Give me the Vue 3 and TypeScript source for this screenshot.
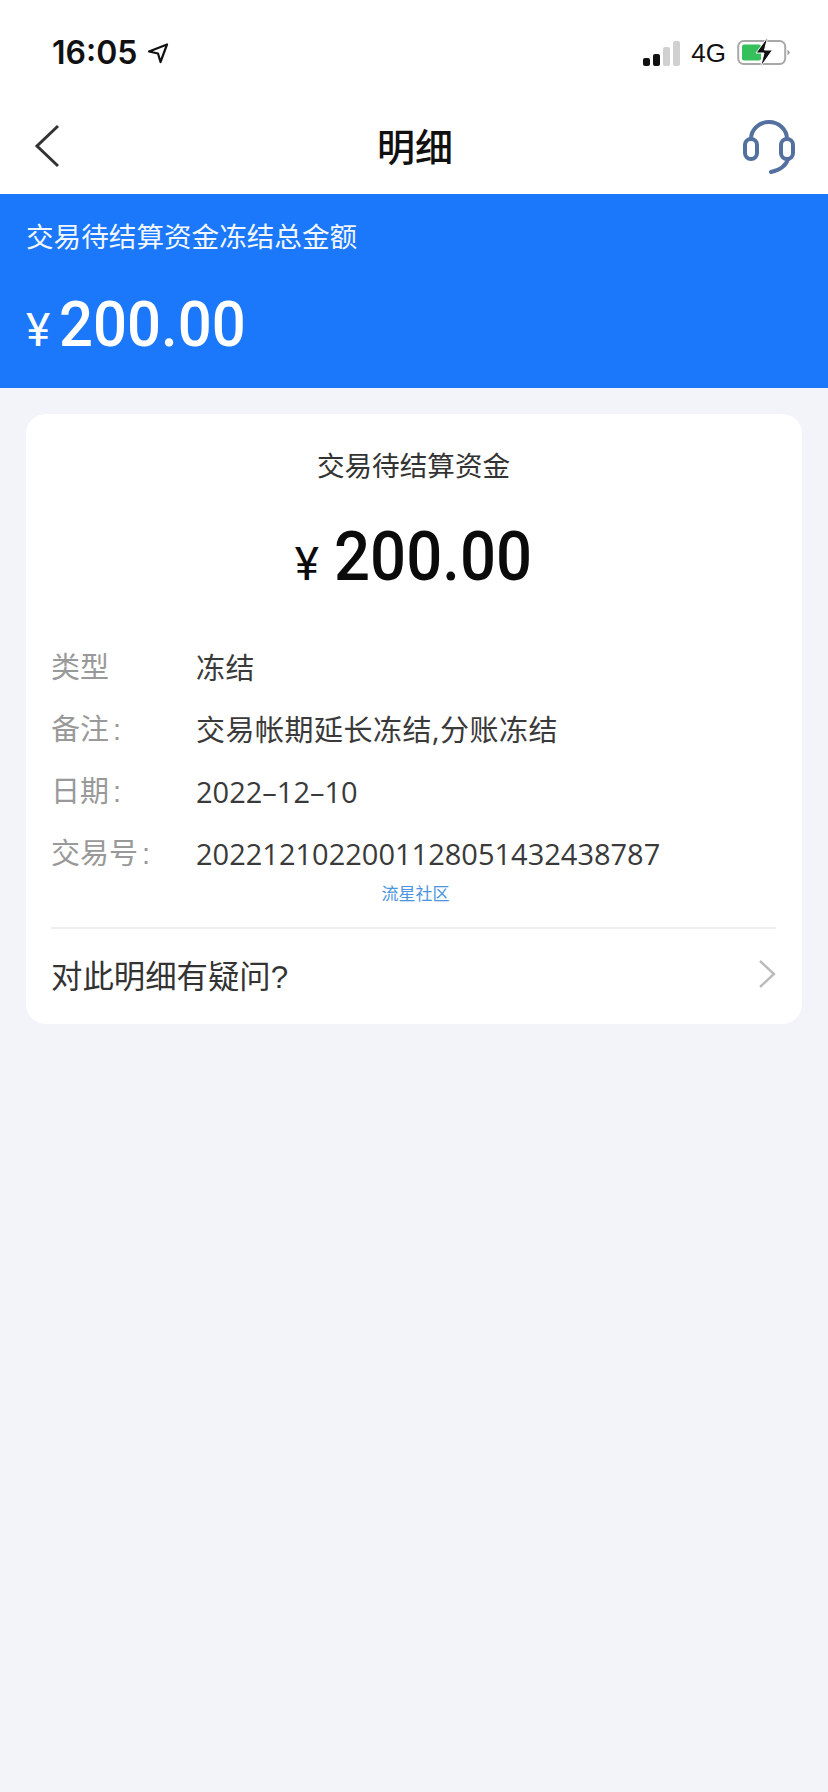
<script setup lang="ts">
const rows: { label: string; colon: boolean; value: string; cjk: boolean }[] = [
  { label: '类型', colon: false, value: '冻结', cjk: true },
  { label: '备注', colon: true, value: '交易帐期延长冻结,分账冻结', cjk: true },
  { label: '日期', colon: true, value: '2022–12–10', cjk: false },
  { label: '交易号', colon: true, value: '2022121022001128051432438787', cjk: false },
]
</script>

<template>
  <div class="page">
    <div class="status">
      <div class="time">
        <span>16:05</span>
        <svg class="loc" width="22" height="22" viewBox="0 0 22 22">
          <path d="M2 9.5 20 2.5 13.5 20 11 11.5Z" fill="none" stroke="#111" stroke-width="2.2" stroke-linejoin="round" />
        </svg>
      </div>
      <div class="sys">
        <div class="bars">
          <i class="b1"></i><i class="b2"></i><i class="b3"></i><i class="b4"></i>
        </div>
        <span class="net">4G</span>
        <svg width="53" height="30" viewBox="0 0 53 30">
          <rect x="1.2" y="3" width="47" height="23" rx="5.5" fill="#fff" stroke="#a8a8a8" stroke-width="2" />
          <rect x="5" y="6.5" width="19" height="16" rx="2" fill="#35c05c" />
          <path d="M50.5 11.5 53 14.5 50.5 17.5Z" fill="#999" />
          <path d="M30 0 19 15h8l-3.500 14 12-17h-8l3-12Z" fill="#111" stroke="#fff" stroke-width="1" />
        </svg>
      </div>
    </div>
    <div class="nav">
      <svg class="back" width="28" height="44" viewBox="0 0 28 44">
        <path d="M24 2 3 22l21 20" fill="none" stroke="#333" stroke-width="3" />
      </svg>
      <h1>明细</h1>
      <svg class="help" width="54" height="54" viewBox="0 0 54 54" fill="none" stroke="#54709f" stroke-width="4">
        <path d="M9 19a18 17 0 0 1 36 0" />
        <rect x="3" y="19" width="12" height="20" rx="6" />
        <rect x="39" y="19" width="12" height="20" rx="6" />
        <path d="M46 39c-2 7-8 11-17 13" stroke-linecap="round" />
      </svg>
    </div>
    <div class="banner">
      <div class="banner-title">交易待结算资金冻结总金额</div>
      <div class="amount">
        <span class="cur">¥</span><span class="num">200.00</span>
      </div>
    </div>
    <div class="card">
      <div class="card-title">交易待结算资金</div>
      <div class="amount dark">
        <span class="cur">¥</span><span class="num">200.00</span>
      </div>
      <div class="rows">
        <div v-for="r in rows" :key="r.label" class="row">
          <span class="label">{{ r.label }}<span v-if="r.colon" class="colon">:</span></span>
          <span class="value" :class="{ cjk: r.cjk }">{{ r.value }}</span>
        </div>
      </div>
      <div class="mark">流星社区</div>
      <div class="foot">
        <span>对此明细有疑问?</span>
        <svg width="18" height="30" viewBox="0 0 18 30">
          <path d="M2 2l14 13L2 28" fill="none" stroke="#bbb" stroke-width="2.4" />
        </svg>
      </div>
    </div>
  </div>
</template>

<style>
html, body { margin: 0; background: #f3f4f9; }
</style>

<style scoped>
.page {
  width: 828px;
  height: 1792px;
  background: #f3f4f9;
  font-family: "Liberation Sans", "Noto Sans CJK SC", sans-serif;
  overflow: hidden;
}
.status {
  height: 96px;
  background: #fff;
  display: flex;
  justify-content: space-between;
  align-items: flex-start;
  padding: 33px 38px 0 52px;
  box-sizing: border-box;
}
.time {
  display: flex;
  align-items: center;
  gap: 10px;
  font-family: Inter, sans-serif;
  font-size: 32px;
  font-weight: 600;
  line-height: 40px;
  color: #111;
}
.sys { display: flex; align-items: center; gap: 11px; height: 40px; }
.bars { display: flex; align-items: flex-end; gap: 3px; height: 26px; }
.bars i { width: 7px; border-radius: 2px; background: #d0d0d0; }
.bars .b1 { height: 8px; background: #111; }
.bars .b2 { height: 12px; background: #111; }
.bars .b3 { height: 19px; }
.bars .b4 { height: 25px; }
.net { font-size: 26px; color: #111; }
.nav {
  height: 98px;
  background: #fff;
  display: grid;
  grid-template-columns: 1fr auto 1fr;
  align-items: center;
  padding: 0 32px 0 34px;
  box-sizing: border-box;
}
.nav h1 {
  margin: 0 0 2px;
  font-size: 38px;
  font-weight: 500;
  color: #111;
}
.back { margin-top: 2px; }
.help { margin-top: 4px; justify-self: end; }
.banner {
  height: 194px;
  background: #1b78fb;
  color: #fff;
  padding: 24px 26px 0;
  box-sizing: border-box;
}
.banner-title { font-size: 27.6px; line-height: 40px; color: #f1f6ff; }
.amount {
  display: flex;
  align-items: baseline;
  gap: 9px;
  margin-top: 31px;
  font-family: Roboto, sans-serif;
  font-weight: 500;
  font-size: 63px;
  line-height: 72px;
}
.cur { font-size: 46px; font-weight: 400; }
.num {
  display: inline-block;
  transform: scaleX(0.95);
  transform-origin: left center;
  margin-right: -10px;
}
.card {
  margin: 26px 26px 0;
  height: 610px;
  background: #fff;
  border-radius: 20px;
  padding: 33px 26px 0 25px;
  box-sizing: border-box;
}
.card-title {
  text-align: center;
  font-size: 27.6px;
  line-height: 40px;
  color: #333;
}
.amount.dark {
  justify-content: center;
  margin-top: 31px;
  color: #0b0b0b;
  font-size: 69px;
  line-height: 78px;
  gap: 15px;
}
.dark .num {
  transform: scaleX(0.92);
  margin-right: -17px;
}
.rows { margin-top: 34px; }
.row {
  display: flex;
  height: 62px;
  align-items: center;
  font-size: 29px;
  line-height: 40px;
}
.label { width: 145px; color: #999; }
.colon { margin-left: 4px; }
.value { color: #3a3a3a; font-family: "Open Sans", "Noto Sans CJK SC", sans-serif; }
.value.cjk { letter-spacing: 0.5px; }
.mark {
  margin: -1px 0 0 4px;
  text-align: center;
  font-size: 17px;
  line-height: 22px;
  color: #4a94e0;
}
.foot {
  margin-top: 21px;
  border-top: 2px solid #eee;
  height: 90px;
  display: flex;
  align-items: center;
  justify-content: space-between;
  font-size: 31.4px;
  color: #333;
}
</style>
